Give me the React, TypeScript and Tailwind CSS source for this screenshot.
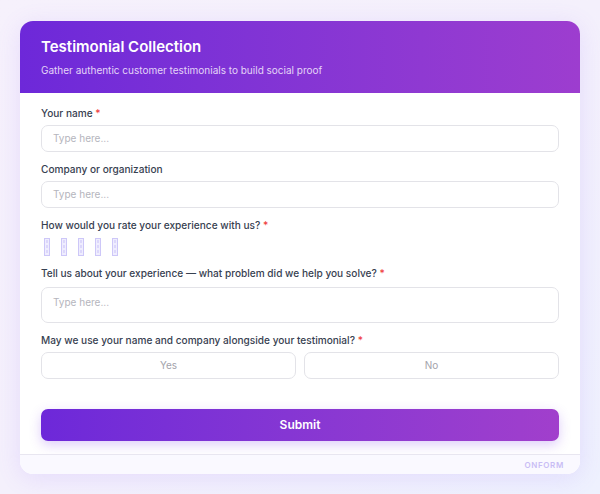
import React from "react";

const font = { fontFamily: "Inter, 'Noto Sans', sans-serif" };

function Label({ children, required }: { children: React.ReactNode; required?: boolean }) {
  return (
    <div className="text-[10.1px] leading-[14px] font-medium text-[#374151]">
      {children}
      {required && <span className="text-[#ef4444]"> *</span>}
    </div>
  );
}

function Input({ tall }: { tall?: boolean }) {
  return (
    <div
      className={`${tall ? "mt-[7px] h-[36px] items-start pt-[7px]" : "mt-[5px] h-[27px] items-center"} flex rounded-[7px] border-[1.5px] border-[#e3e3e8] bg-white px-[11px] text-[10px] text-[#b5b5bd]`}
    >
      Type here...
    </div>
  );
}

function Star() {
  return (
    <div className="flex h-[18px] w-[6px] flex-col items-center justify-center gap-[2px] border border-[#cdc7f8] bg-[#efedfe]">
      <div className="h-[3px] w-[2px] bg-[#dcd7fb]" />
      <div className="h-[3px] w-[2px] bg-[#dcd7fb]" />
      <div className="h-[3px] w-[2px] bg-[#dcd7fb]" />
    </div>
  );
}

export default function App() {
  return (
    <div
      style={font}
      className="min-h-[494px] w-[600px] bg-gradient-to-br from-[#f6f1fc] via-[#f4f0fc] to-[#eef1fe] px-[20px] pt-[21px] pb-[21px]"
    >
      <div className="overflow-hidden rounded-[13px] bg-white shadow-[0_4px_24px_rgba(139,92,246,0.14)]">
        <div className="h-[72px] bg-gradient-to-r from-[#6d28d9] to-[#9d3dcf] px-[21px] pt-[16px]">
          <div className="text-[15px] leading-[20px] font-semibold text-white">Testimonial Collection</div>
          <div className="mt-[5px] text-[10px] leading-[16px] text-[#e4d4f7]">
            Gather authentic customer testimonials to build social proof
          </div>
        </div>
        <div className="px-[21px] pt-[13px] pb-[13px]">
          <div className="flex flex-col gap-[10px]">
            <div>
              <Label required>Your name</Label>
              <Input />
            </div>
            <div>
              <Label>Company or organization</Label>
              <Input />
            </div>
            <div>
              <Label required>How would you rate your experience with us?</Label>
              <div className="mt-[5px] flex h-[19px] items-center gap-[11px] pl-[3px]">
                <Star />
                <Star />
                <Star />
                <Star />
                <Star />
              </div>
            </div>
            <div>
              <Label required>Tell us about your experience — what problem did we help you solve?</Label>
              <Input tall />
            </div>
            <div>
              <Label required>May we use your name and company alongside your testimonial?</Label>
              <div className="mt-[5px] grid grid-cols-2 gap-[8px]">
                <div className="flex h-[27px] items-center justify-center rounded-[7px] border-[1.5px] border-[#e3e3e8] text-[10px] text-[#a3a3ab]">
                  Yes
                </div>
                <div className="flex h-[27px] items-center justify-center rounded-[7px] border-[1.5px] border-[#e3e3e8] text-[10px] text-[#a3a3ab]">
                  No
                </div>
              </div>
            </div>
          </div>
          <div className="mt-[30px] flex h-[32px] items-center justify-center rounded-[7px] bg-gradient-to-r from-[#6d28d9] to-[#a13fcc] text-[12px] font-semibold text-white shadow-[0_4px_12px_rgba(124,58,237,0.25)]">
            Submit
          </div>
        </div>
        <div className="flex h-[20px] items-center justify-end border-t border-[#e8e6f0] bg-[#faf9ff] pr-[16px]">
          <span className="text-[8px] font-semibold tracking-[0.08em] text-[#c9bdf5]">ONFORM</span>
        </div>
      </div>
    </div>
  );
}
